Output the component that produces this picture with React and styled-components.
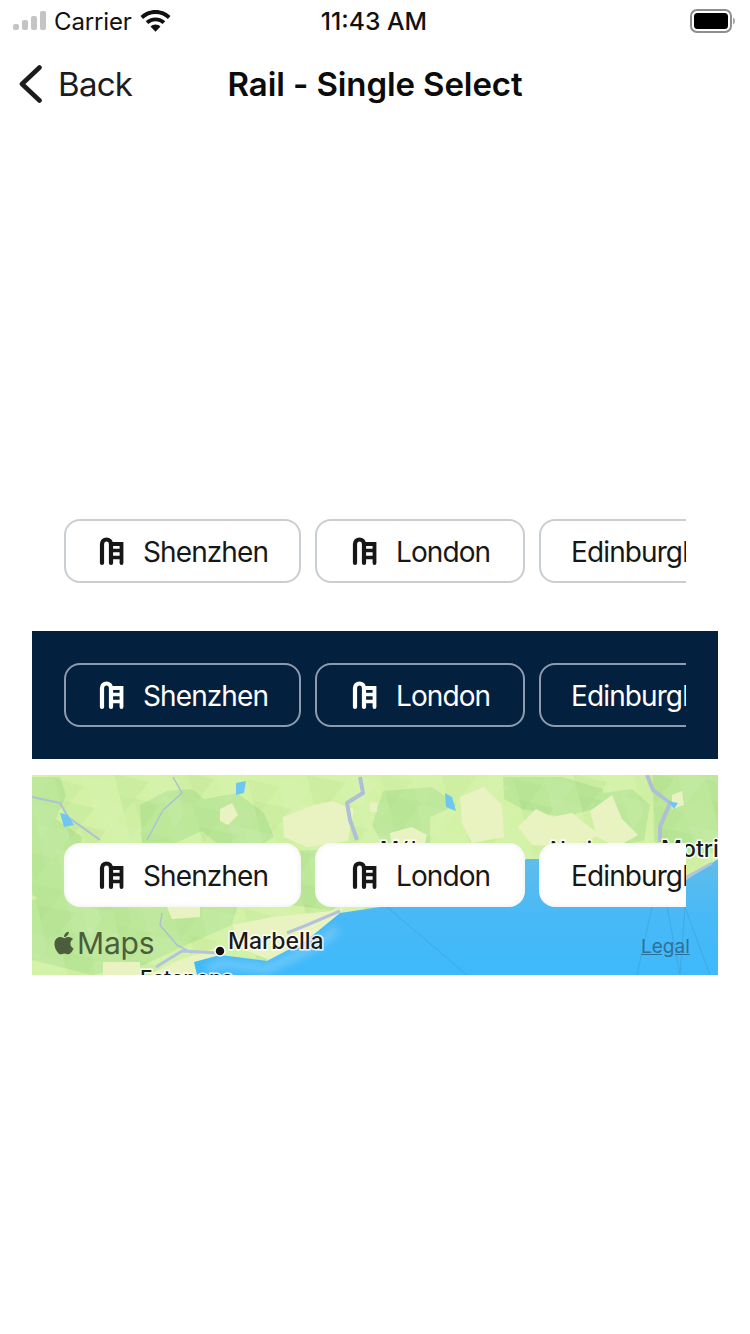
import React from "react";
import styled, { createGlobalStyle } from "styled-components";
import { FaApple } from "react-icons/fa";

const Global = createGlobalStyle`
    html, body { margin: 0; padding: 0; background: #fff; }
    body { font-family: Inter, "Liberation Sans", sans-serif; color: #111; }
    * { box-sizing: border-box; }
`;

const Page = styled.div`
    width: 750px;
    height: 1334px;
    overflow: hidden;
    background: #fff;
`;

const StatusBar = styled.div`
    height: 40px;
    display: grid;
    grid-template-columns: 1fr auto 1fr;
    align-items: center;
    padding: 2px 15px 0 13px;
    font-size: 24px;
    letter-spacing: -0.15px;
    color: #111;
`;

const StatusLeft = styled.div`
    display: flex;
    align-items: center;
    gap: 8px;
`;

const Time = styled.div`
    font-weight: 500;
    font-size: 24.7px;
    letter-spacing: 0;
`;

const StatusRight = styled.div`
    display: flex;
    justify-content: flex-end;
`;

const Nav = styled.div`
    height: 88px;
    display: grid;
    grid-template-columns: 1fr auto 1fr;
    align-items: center;
    padding: 0 19px;
`;

const BackButton = styled.div`
    display: flex;
    align-items: center;
    gap: 16px;
    font-size: 33px;
    letter-spacing: -0.7px;
    color: #1c1c1e;
`;

const Title = styled.div`
    font-size: 33px;
    font-weight: 600;
    letter-spacing: -0.1px;
    color: #0b0b0b;
`;

const Stage = styled.div`
    padding: 359px 32px 0;
    display: flex;
    flex-direction: column;
    gap: 16px;
`;

const Band = styled.div`
    padding: 32px;
    background: ${props => props.$dark ? "#04203f" : "transparent"};
`;

const MapBand = styled.div`
    position: relative;
    height: 200px;
    padding: 0 32px;
    display: flex;
    align-items: center;
    overflow: hidden;
`;

const MapArt = styled.svg`
    position: absolute;
    top: 0;
    left: 0;
`;

const MapsMark = styled.div`
    position: absolute;
    left: 19px;
    top: 150px;
    display: flex;
    align-items: center;
    font-size: 30px;
    letter-spacing: -0.2px;
    color: #4c5d3c;
`;

const Legal = styled.div`
    position: absolute;
    left: 609px;
    top: 160px;
    font-size: 19px;
    color: #2f7099;
    text-decoration: underline;
`;

const Rail = styled.div`
    position: relative;
    display: flex;
    gap: 14px;
    overflow: hidden;
    width: 622px;
`;

const Chip = styled.div`
    flex: none;
    height: 64px;
    min-width: ${props => props.$plain ? "240px" : "210px"};
    display: flex;
    align-items: center;
    justify-content: ${props => props.$plain ? "flex-start" : "center"};
    gap: 17px;
    padding: 1px 31px 0 30px;
    border-radius: 16px;
    font-size: 28px;
    letter-spacing: -0.9px;
    background: ${props => props.$variant === "map" ? "#fff" : "transparent"};
    color: ${props => props.$variant === "dark" ? "#fff" : "#171717"};
    border: 2px solid;
    border-color: ${props => {
        if (props.$variant === "map") return "#f8f8f8";
        return props.$variant === "dark" ? "#8d9bab" : "#c9ced3";
    }};
    box-shadow: ${props => props.$variant === "map" ? "inset 0 0 5px rgba(0,0,0,0.03)" : "none"};
`;

const Signal = () => (
    <svg width="33" height="20" viewBox="0 0 33 20">
        <rect x="0" y="13" width="6" height="6" rx="2" fill="#c4c4c4" />
        <rect x="9" y="9" width="6" height="10" rx="2" fill="#c4c4c4" />
        <rect x="18" y="5" width="6" height="14" rx="2" fill="#c4c4c4" />
        <rect x="27" y="0" width="6" height="19" rx="2" fill="#c4c4c4" />
    </svg>
);

const Wifi = () => (
    <svg width="31" height="22" viewBox="0 0 31 22" fill="#111">
        <path d="M15.5 0C9.6 0 4.3 2.3.5 6.1l2.6 2.8c3.2-3.1 7.6-5 12.4-5s9.2 1.9 12.4 5l2.6-2.8C26.7 2.3 21.4 0 15.5 0z" />
        <path d="M15.5 7.4c-3.8 0-7.3 1.5-9.8 3.9l2.7 2.8c1.8-1.7 4.3-2.8 7.1-2.8s5.3 1.1 7.1 2.8l2.7-2.8c-2.5-2.4-6-3.9-9.8-3.9z" />
        <path d="M15.5 14.6c-2 0-3.7.8-5 2l5 5.2 5-5.2c-1.3-1.2-3-2-5-2z" />
    </svg>
);

const Battery = () => (
    <svg width="46" height="24" viewBox="0 0 46 24">
        <rect x="2" y="1" width="40" height="22" rx="6" fill="none" stroke="#8e8e8e" strokeWidth="2" />
        <rect x="5" y="4" width="34" height="16" rx="3.5" fill="#000" />
        <path d="M44 8.5c1.2.4 2 1.9 2 3.5s-.8 3.1-2 3.5z" fill="#a8a8a8" />
    </svg>
);

const Chevron = () => (
    <svg width="23" height="38" viewBox="0 0 23 38" fill="none" stroke="#1c1c1e" strokeWidth="4.6" strokeLinecap="round" strokeLinejoin="round">
        <path d="M20.5 2.5 3 19l17.5 16.5" />
    </svg>
);

const RailIcon = ({ color }) => (
    <svg width="30" height="29" viewBox="-3 0 30 29" fill="none" stroke={color} strokeWidth="4.2" strokeLinecap="round">
        <path d="M3 26V7a4.5 4.5 0 0 1 9 0v19" />
        <path d="M12 7h10.5v19" strokeWidth="3.8" />
        <path d="M13 13.5h9M13 20.5h9" strokeWidth="3.4" strokeLinecap="butt" />
    </svg>
);

const Poly = styled.polygon`
    fill: ${props => props.color};
`;

const Label = styled.text`
    font-family: Inter, "Liberation Sans", sans-serif;
    font-size: ${props => props.$size}px;
    font-weight: 500;
    fill: #1a1a1a;
    stroke: rgba(255, 255, 255, 0.85);
    stroke-width: 3px;
    paint-order: stroke;
`;

const greenPatches = [
    "0,2 28,2 34,20 24,44 50,62 44,110 20,130 0,120",
    "108,30 135,16 160,14 172,24 205,18 232,38 242,62 226,72 190,72 170,56 135,72 110,70",
    "0,125 40,114 95,122 125,132 205,132 200,150 150,172 112,190 60,200 0,185",
    "351,16 400,12 425,30 398,42 398,70 352,72 340,50",
    "471,2 530,2 571,14 571,32 530,42 490,34 472,24",
    "571,18 600,14 618,30 612,66 585,70 571,40",
    "621,0 686,0 686,78 640,80 622,66",
    "242,76 330,74 345,110 300,135 240,128",
];

const creamPatches = [
    "251,42 282,30 300,26 322,34 316,66 275,72 252,62",
    "428,22 452,12 470,30 472,62 440,68 430,48",
    "486,52 504,34 520,42 540,38 568,60 540,72 500,70",
    "558,36 580,20 590,44 606,60 585,72 565,62",
    "188,34 200,28 206,40 196,50 188,46",
    "358,58 380,52 395,60 392,72 360,72",
    "338,28 345,27 345,37 338,37",
    "135,132 168,132 168,142 140,144",
    "201,150 240,142 300,136 312,132 300,150 270,170 240,186 205,172",
    "71,187 108,187 108,200 71,200",
    "120,198 150,184 188,172 188,200 120,200",
    "640,20 650,16 652,30 640,34",
];

// hill shading: faint triangles on a jittered grid
const facets = [];
for (let row = 0; row < 8; row++) {
    for (let col = 0; col < 26; col++) {
        const n = (col * 37 + row * 91) % 17;
        const x = col * 27 + n - 8;
        const y = row * 26 + (n * 3) % 11 - 6;
        facets.push({
            points: `${x},${y} ${x + 26 + n},${y + 8} ${x + 10},${y + 30 + n}`,
            shade: n % 2 ? "#6fae4f" : "#ffffff",
            opacity: 0.035 + (n % 5) * 0.008,
        });
    }
}

const RailChips = ({ variant }) => {
    const iconColor = variant === "dark" ? "#fff" : "#171717";
    return (
        <Rail>
            <Chip $variant={variant}><RailIcon color={iconColor} />Shenzhen</Chip>
            <Chip $variant={variant}><RailIcon color={iconColor} />London</Chip>
            <Chip $variant={variant} $plain>Edinburgh</Chip>
        </Rail>
    );
};

const MapDrawing = () => (
    <MapArt width="686" height="200" viewBox="0 0 686 200">
        <defs>
            <linearGradient id="sea" x1="0" y1="0" x2="0" y2="1">
                <stop offset="0" stopColor="#5fbdea" />
                <stop offset="0.5" stopColor="#48b9f7" />
                <stop offset="1" stopColor="#3fb9fb" />
            </linearGradient>
            <filter id="soft" x="-10%" y="-30%" width="120%" height="160%">
                <feGaussianBlur stdDeviation="4" />
            </filter>
        </defs>
        <rect width="686" height="200" fill="#d3f2a6" />
        {greenPatches.map(p => <Poly key={p} points={p} color="#bde89a" />)}
        {facets.map(f => <polygon key={f.points} points={f.points} fill={f.shade} opacity={f.opacity} />)}
        {creamPatches.map(p => <Poly key={p} points={p} color="#e9f3c2" />)}
        <g fill="none" stroke="#aebfd6" strokeLinejoin="round">
            <path d="M615 0 621 15 638 28 628 52 628 67" strokeWidth="4" />
            <path d="M328 2 331 18 315 28 318 45 325 65" strokeWidth="4" />
            <path d="M0 22 28 28 36 42 68 65" strokeWidth="2" />
            <path d="M141 2 150 18 131 35 115 65" strokeWidth="1.5" />
            <path d="M130 138 128 150 145 170 160 178" strokeWidth="1.5" />
        </g>
        <g fill="#6fc7ef">
            <polygon points="204,8 214,6 212,18 204,20" />
            <polygon points="28,38 36,40 42,50 32,52" />
            <polygon points="413,18 420,22 424,36 414,32" />
            <polygon points="636,26 646,28 642,34" />
        </g>
        <polygon points="165,200 162,187 188,180 235,186 275,165 308,138 348,132 420,108 495,84 510,84 590,112 654,105 686,84 686,200" fill="url(#sea)" />
        <path d="M175 194 190 188 235 194 282 172 305 154" fill="none" stroke="#8fd6f8" strokeWidth="7" opacity="0.7" filter="url(#soft)" />
        <path d="M124 192 150 176 186 178 M255 158 275 150 308 136" fill="none" stroke="#b4c3dc" strokeWidth="3" />
        <path d="M630 108 655 102 680 88" fill="none" stroke="#b4c3dc" strokeWidth="3" />
        <g fill="none" stroke="#3aa0d8" strokeWidth="1" opacity="0.6">
            <path d="M355 132 435 200" />
            <path d="M620 132 605 200" />
            <path d="M635 132 648 200" />
            <path d="M653 132 678 200M653 132 648 200" />
        </g>
        <Label x="108" y="211" $size={21}>Estepona</Label>
        <Label x="348" y="82" $size={21}>Málaga</Label>
        <Label x="518" y="82" $size={21}>Nerja</Label>
        <Label x="629" y="82" $size={23}>Motril</Label>
        <Label x="196" y="174" $size={23}>Marbella</Label>
        <circle cx="188" cy="176" r="5" fill="#111" stroke="#fff" strokeWidth="1.5" />
    </MapArt>
);

export default function App() {
    return (
        <Page>
            <Global />
            <StatusBar>
                <StatusLeft><Signal />Carrier<Wifi /></StatusLeft>
                <Time>11:43 AM</Time>
                <StatusRight><Battery /></StatusRight>
            </StatusBar>
            <Nav>
                <BackButton><Chevron />Back</BackButton>
                <Title>Rail - Single Select</Title>
            </Nav>
            <Stage>
                <Band><RailChips variant="light" /></Band>
                <Band $dark><RailChips variant="dark" /></Band>
                <MapBand>
                    <MapDrawing />
                    <MapsMark><FaApple size={26} />Maps</MapsMark>
                    <Legal>Legal</Legal>
                    <RailChips variant="map" />
                </MapBand>
            </Stage>
        </Page>
    );
}
